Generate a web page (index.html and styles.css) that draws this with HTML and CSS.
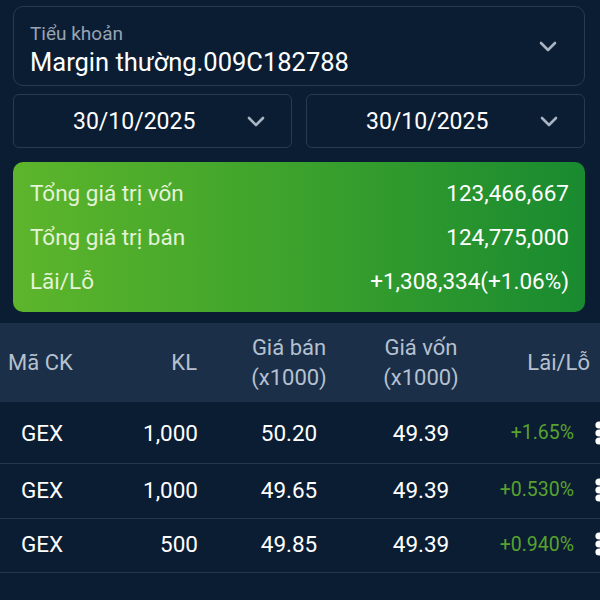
FILE: index.html
```html
<!DOCTYPE html>
<html lang="vi">
<head>
    <meta charset="UTF-8">
    <title>Lãi/Lỗ đã thực hiện</title>
    <link rel="stylesheet" href="styles.css">
</head>
<body>
    <div class="filters">
        <div class="account">
            <div class="account-text">
                <div class="account-label">Tiểu khoản</div>
                <div class="account-value">Margin thường.009C182788</div>
            </div>
            <svg class="chevron" width="18" height="11" viewBox="0 0 18 11"><path d="M2 2 L9 9 L16 2"/></svg>
        </div>

        <div class="dates">
            <div class="date-box">
                <span>30/10/2025</span>
                <svg class="chevron" width="18" height="11" viewBox="0 0 18 11"><path d="M2 2 L9 9 L16 2"/></svg>
            </div>
            <div class="date-box">
                <span>30/10/2025</span>
                <svg class="chevron" width="18" height="11" viewBox="0 0 18 11"><path d="M2 2 L9 9 L16 2"/></svg>
            </div>
        </div>

        <div class="summary">
            <div class="summary-row"><span>Tổng giá trị vốn</span><span class="num">123,466,667</span></div>
            <div class="summary-row"><span>Tổng giá trị bán</span><span class="num">124,775,000</span></div>
            <div class="summary-row"><span>Lãi/Lỗ</span><span class="num">+1,308,334(+1.06%)</span></div>
        </div>
    </div>

    <div class="table">
        <div class="thead">
            <div class="th first">Mã CK</div>
            <div class="th right">KL</div>
            <div class="th">Giá bán<br>(x1000)</div>
            <div class="th">Giá vốn<br>(x1000)</div>
            <div class="th right last">Lãi/Lỗ</div>
        </div>

        <div class="row">
            <div class="td first">GEX</div>
            <div class="td right">1,000</div>
            <div class="td">50.20</div>
            <div class="td">49.39</div>
            <div class="td right pct">+1.65%</div>
            <div class="more"><svg width="12" height="26" viewBox="0 0 12 26"><circle cx="6" cy="5" r="3.6"/><circle cx="6" cy="13" r="3.6"/><circle cx="6" cy="21" r="3.6"/></svg></div>
        </div>
        <div class="row">
            <div class="td first">GEX</div>
            <div class="td right">1,000</div>
            <div class="td">49.65</div>
            <div class="td">49.39</div>
            <div class="td right pct">+0.530%</div>
            <div class="more"><svg width="12" height="26" viewBox="0 0 12 26"><circle cx="6" cy="5" r="3.6"/><circle cx="6" cy="13" r="3.6"/><circle cx="6" cy="21" r="3.6"/></svg></div>
        </div>
        <div class="row">
            <div class="td first">GEX</div>
            <div class="td right">500</div>
            <div class="td">49.85</div>
            <div class="td">49.39</div>
            <div class="td right pct">+0.940%</div>
            <div class="more"><svg width="12" height="26" viewBox="0 0 12 26"><circle cx="6" cy="5" r="3.6"/><circle cx="6" cy="13" r="3.6"/><circle cx="6" cy="21" r="3.6"/></svg></div>
        </div>
    </div>
</body>
</html>
```

FILE: styles.css
```css
body {
    margin: 0;
    background-color: #0b1d33;
    font-family: Roboto, "Noto Sans", sans-serif;
    color: #ffffff;
    overflow: hidden;
}
.filters {
    padding: 6px 15px 0 13px;
}
.account {
    height: 78px;
    border: 1px solid #263a53;
    border-radius: 10px;
    display: flex;
    align-items: center;
    justify-content: space-between;
    padding: 0 27px 0 16px;
}
.account-text {
    padding-top: 7px;
}
.account-label {
    font-size: 19px;
    color: #97a3b3;
    line-height: 24px;
}
.account-value {
    font-size: 25.5px;
    line-height: 32px;
}
.chevron path {
    fill: none;
    stroke: #a9b4c2;
    stroke-width: 2.6;
    stroke-linecap: round;
    stroke-linejoin: round;
}
.dates {
    display: grid;
    grid-template-columns: 1fr 1fr;
    gap: 14px;
    margin-top: 8px;
}
.date-box {
    height: 52px;
    border: 1px solid #263a53;
    border-radius: 6px;
    display: flex;
    align-items: center;
    justify-content: space-between;
    padding: 0 26px 0 59px;
    font-size: 23px;
}
.summary {
    margin-top: 14px;
    height: 150px;
    border-radius: 10px;
    background: linear-gradient(90deg, #5db52b 0%, #3fa42c 45%, #198a30 100%);
    padding: 8px 16px 8px 17px;
    box-sizing: border-box;
    display: flex;
    flex-direction: column;
    justify-content: center;
}
.summary-row {
    display: flex;
    justify-content: space-between;
    height: 44px;
    align-items: center;
    font-size: 22.5px;
    color: #e4f3d9;
}
.summary-row .num {
    color: #ffffff;
}
.table {
    margin-top: 11px;
}
.thead {
    display: grid;
    grid-template-columns: 110px 90px 178px 86px 1fr;
    align-items: center;
    height: 79px;
    background-color: #1b2f48;
    color: #b5c1d0;
    font-size: 22px;
    line-height: 30px;
}
.th {
    text-align: center;
}
.th.first {
    text-align: left;
    padding-left: 8px;
}
.right {
    text-align: right;
}
.th.right {
    text-align: right;
    padding-right: 3px;
}
.th.last {
    padding-right: 10px;
}
.row {
    display: grid;
    grid-template-columns: 110px 90px 178px 86px 112px 24px;
    align-items: center;
    height: 55px;
    border-bottom: 1px solid #22384f;
    font-size: 22.5px;
    padding-bottom: 3px;
    box-sizing: border-box;
}
.thead + .row {
    height: 62px;
    padding-bottom: 0;
}
.row:last-child {
    height: 54px;
}
.td {
    text-align: center;
}
.td.first {
    text-align: left;
    padding-left: 21px;
}
.td.right {
    text-align: right;
    padding-right: 2px;
}
.td.pct {
    font-size: 19.5px;
    color: #58a22e;
}
.more {
    display: flex;
    align-items: center;
    padding-left: 17px;
}
.more svg {
    flex-shrink: 0;
}
.more circle {
    fill: #ffffff;
}
```
